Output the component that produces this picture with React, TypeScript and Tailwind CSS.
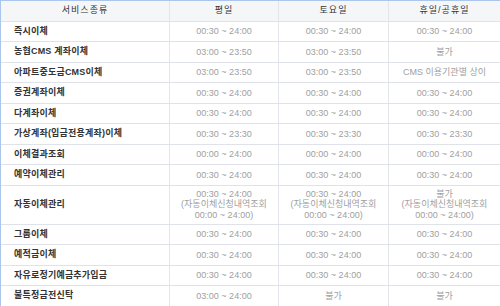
const rows: { name: string; weekday: string[]; sat: string[]; holiday: string[] }[] = [
  { name: "즉시이체", weekday: ["00:30 ~ 24:00"], sat: ["00:30 ~ 24:00"], holiday: ["00:30 ~ 24:00"] },
  { name: "농협CMS 계좌이체", weekday: ["03:00 ~ 23:50"], sat: ["03:00 ~ 23:50"], holiday: ["불가"] },
  { name: "아파트중도금CMS이체", weekday: ["03:00 ~ 23:50"], sat: ["03:00 ~ 23:50"], holiday: ["CMS 이용기관별 상이"] },
  { name: "증권계좌이체", weekday: ["00:30 ~ 24:00"], sat: ["00:30 ~ 24:00"], holiday: ["00:30 ~ 24:00"] },
  { name: "다계좌이체", weekday: ["00:30 ~ 24:00"], sat: ["00:30 ~ 24:00"], holiday: ["00:30 ~ 24:00"] },
  { name: "가상계좌(입금전용계좌)이체", weekday: ["00:30 ~ 23:30"], sat: ["00:30 ~ 23:30"], holiday: ["00:30 ~ 23:30"] },
  { name: "이체결과조회", weekday: ["00:00 ~ 24:00"], sat: ["00:00 ~ 24:00"], holiday: ["00:00 ~ 24:00"] },
  { name: "예약이체관리", weekday: ["00:30 ~ 24:00"], sat: ["00:30 ~ 24:00"], holiday: ["00:30 ~ 24:00"] },
  {
    name: "자동이체관리",
    weekday: ["00:30 ~ 24:00", "(자동이체신청내역조회", "00:00 ~ 24:00)"],
    sat: ["00:30 ~ 24:00", "(자동이체신청내역조회", "00:00 ~ 24:00)"],
    holiday: ["불가", "(자동이체신청내역조회", "00:00 ~ 24:00)"],
  },
  { name: "그룹이체", weekday: ["00:30 ~ 24:00"], sat: ["00:30 ~ 24:00"], holiday: ["00:30 ~ 24:00"] },
  { name: "예적금이체", weekday: ["00:30 ~ 24:00"], sat: ["00:30 ~ 24:00"], holiday: ["00:30 ~ 24:00"] },
  { name: "자유로정기예금추가입금", weekday: ["00:30 ~ 24:00"], sat: ["00:30 ~ 24:00"], holiday: ["00:30 ~ 24:00"] },
  { name: "불특정금전신탁", weekday: ["03:00 ~ 24:00"], sat: ["불가"], holiday: ["불가"] },
];

function TimeCell({ lines, last }: { lines: string[]; last?: boolean }) {
  return (
    <div
      className={`flex flex-col items-center justify-center text-center leading-[10.5px] text-[#a0a0a0] ${
        last ? "" : "border-r border-[#e3e5ea]"
      }`}
    >
      {lines.map((l, i) => (
        <span key={i}>{l}</span>
      ))}
    </div>
  );
}

export default function App() {
  return (
    <div
      className="h-[306px] w-[500px] overflow-hidden bg-white text-[9px]"
      style={{ fontFamily: '"Liberation Sans", "Noto Sans CJK KR", sans-serif' }}
    >
      <div className="border-l border-t border-[#aac6ec]">
        <div className="grid h-[20.5px] grid-cols-[169px_109px_110px_1fr] border-b border-[#dfe2e8] bg-[#f5f6f8] text-[#333] tracking-[1px]">
          <div className="flex items-center justify-center border-r border-[#e3e5ea]">서비스종류</div>
          <div className="flex items-center justify-center border-r border-[#e3e5ea]">평일</div>
          <div className="flex items-center justify-center border-r border-[#e3e5ea]">토요일</div>
          <div className="flex items-center justify-center">휴일/공휴일</div>
        </div>
        {rows.map((r) => (
          <div
            key={r.name}
            className={`grid grid-cols-[169px_109px_110px_1fr] border-b border-[#dfe2e8] ${
              r.weekday.length > 1 ? "h-[39px]" : "h-[20.5px]"
            }`}
          >
            <div className="flex items-center border-r border-[#e3e5ea] pl-[13px] font-semibold tracking-[0.2px] text-[#333]">
              {r.name}
            </div>
            <TimeCell lines={r.weekday} />
            <TimeCell lines={r.sat} />
            <TimeCell lines={r.holiday} last />
          </div>
        ))}
      </div>
    </div>
  );
}
